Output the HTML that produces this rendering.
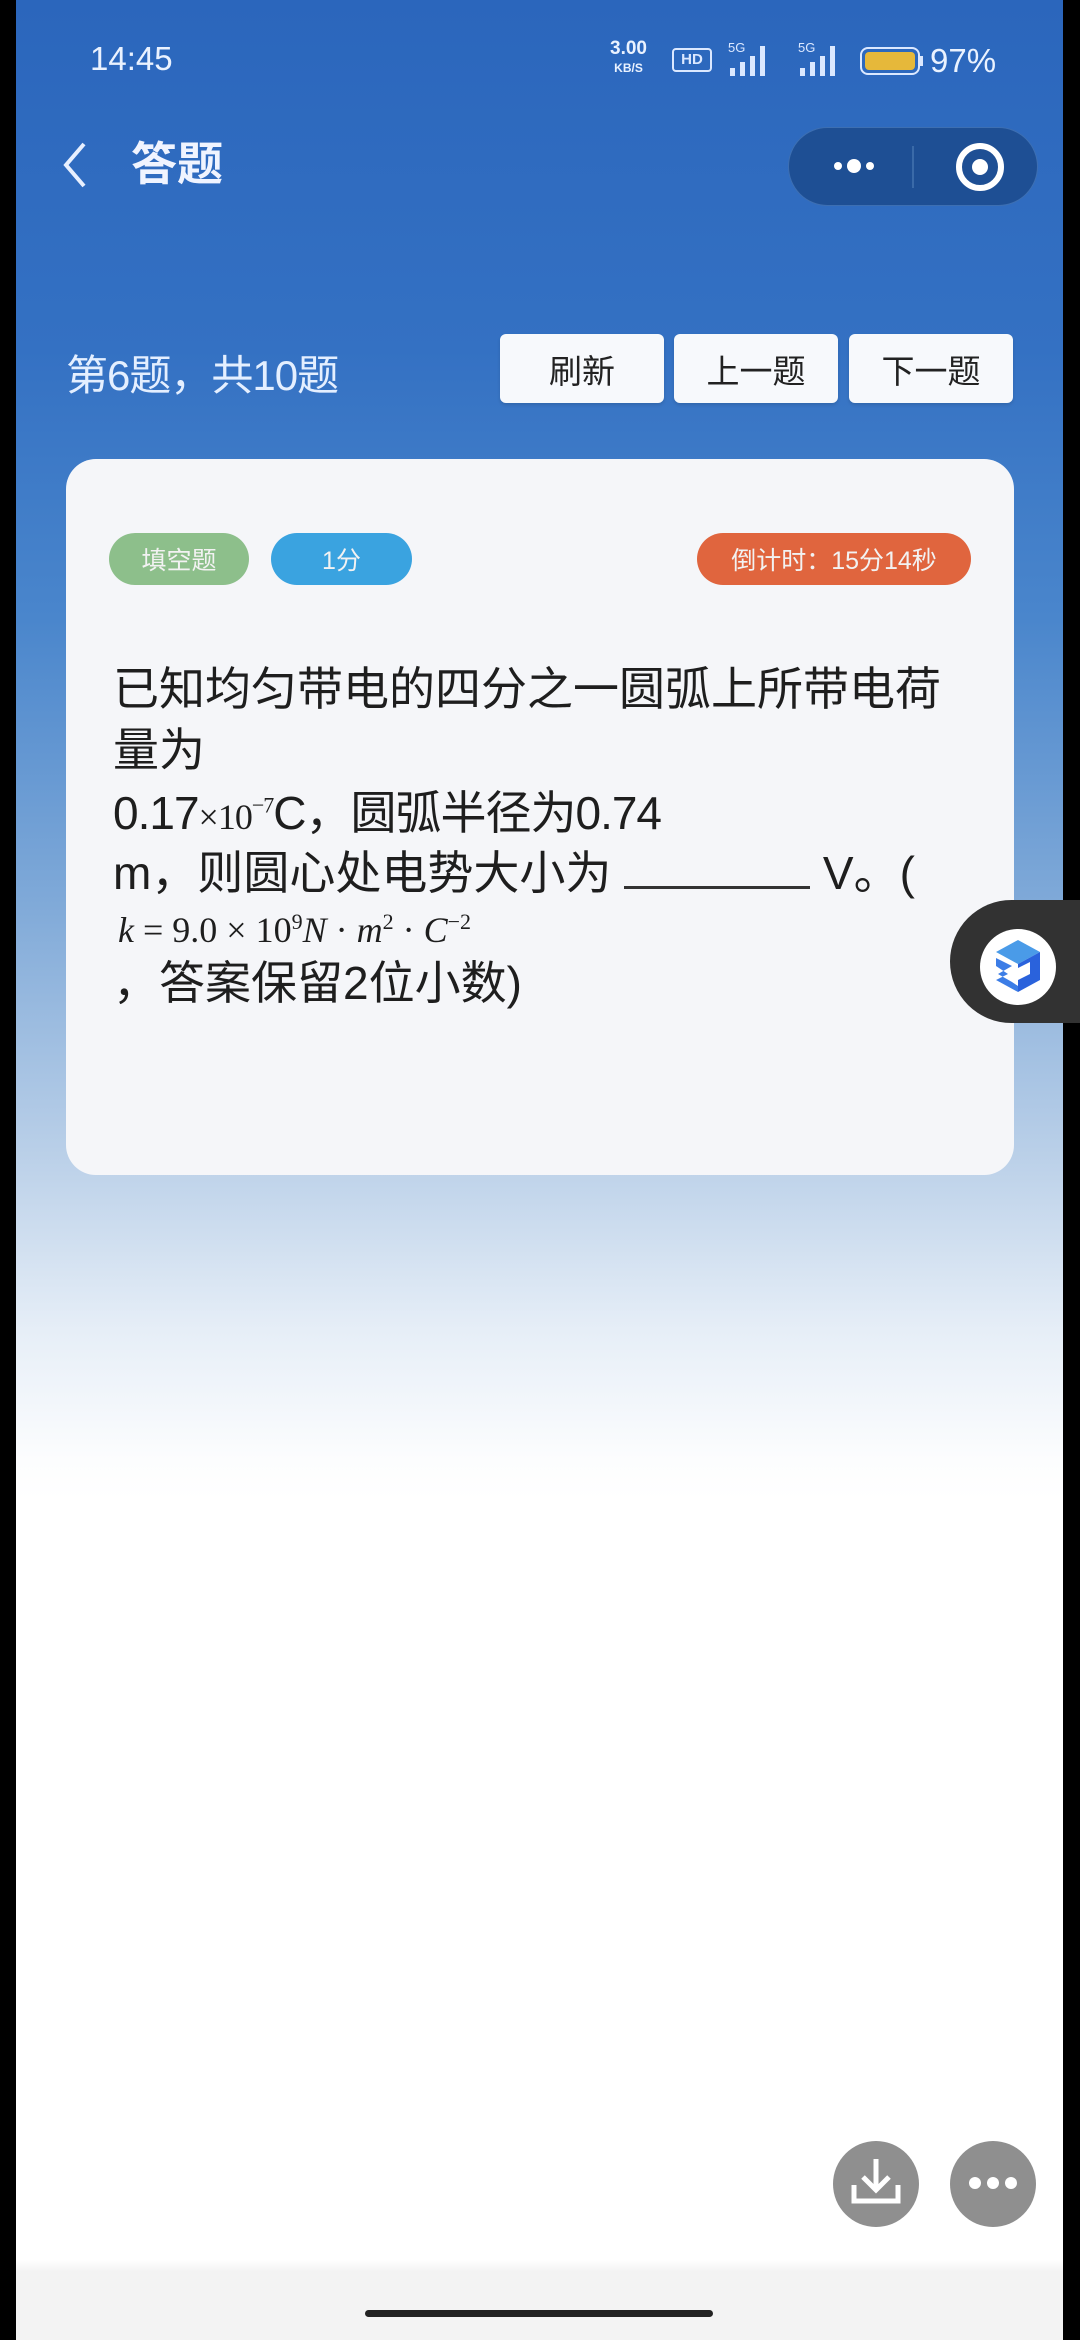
<!DOCTYPE html>
<html><head><meta charset="utf-8">
<style>
*{margin:0;padding:0;box-sizing:border-box}
body{width:1080px;height:2340px;position:relative;overflow:hidden;background:#000;font-family:"Liberation Sans","Noto Sans CJK SC",sans-serif}
#scr{position:absolute;left:16px;top:0;width:1047px;height:2340px;background:linear-gradient(180deg,#2b66bc 0px,#3471c3 350px,#4a86cc 620px,#7fa9d8 900px,#b9cfe8 1150px,#e6eef7 1330px,#fcfdfe 1460px,#fff 1500px,#fff 2260px,#f3f3f3 2272px,#f3f3f3 2340px)}
.a{position:absolute}
.st{color:#eaf2ff}
.btn{position:absolute;top:334px;width:164px;height:69px;background:#f7f9fc;border-radius:6px;color:#222;font-size:33px;display:flex;align-items:center;justify-content:center;box-shadow:0 2px 3px rgba(0,0,0,.12)}
.card{position:absolute;left:50px;top:459px;width:948px;height:716px;background:#f5f6f9;border-radius:30px}
.tag{position:absolute;top:74px;height:52px;border-radius:26px;color:#f2f2f2;font-size:25px;display:flex;align-items:center;justify-content:center}
.q{position:absolute;left:47px;color:#1e1e1e;font-size:46px;line-height:46px;white-space:nowrap}
.m{font-family:"Liberation Serif","DejaVu Serif",serif;font-style:italic}
</style></head><body>
<div id="scr">
<div class="a st" style="left:74px;top:40px;font-size:33px">14:45</div>
<div class="a st" style="left:594px;top:40px;font-size:19px;font-weight:bold;line-height:18px;text-align:center">3.00<br><span style="font-size:12px">KB/S</span></div>
<div class="a" style="left:656px;top:48px;width:40px;height:24px;border:2px solid #dbe8ff;border-radius:4px;color:#dbe8ff;font-size:15px;font-weight:bold;text-align:center;line-height:20px">HD</div>
<svg class="a" style="left:712px;top:38px" width="50" height="40"><text x="0" y="14" font-size="13" fill="#dbe8ff" font-family="Liberation Sans">5G</text><rect x="2" y="30" width="5" height="8" fill="#dbe8ff"/><rect x="12" y="24" width="5" height="14" fill="#dbe8ff"/><rect x="22" y="18" width="5" height="20" fill="#dbe8ff"/><rect x="32" y="8" width="5" height="30" fill="#dbe8ff"/></svg>
<svg class="a" style="left:782px;top:38px" width="50" height="40"><text x="0" y="14" font-size="13" fill="#dbe8ff" font-family="Liberation Sans">5G</text><rect x="2" y="30" width="5" height="8" fill="#dbe8ff"/><rect x="12" y="24" width="5" height="14" fill="#dbe8ff"/><rect x="22" y="18" width="5" height="20" fill="#dbe8ff"/><rect x="32" y="8" width="5" height="30" fill="#dbe8ff"/></svg>
<div class="a" style="left:844px;top:47px;width:60px;height:28px;border:2px solid #dbe8ff;border-radius:8px;padding:3px"><div style="width:100%;height:100%;background:#e6b83a;border-radius:4px"></div></div>
<div class="a" style="left:904px;top:56px;width:3px;height:10px;background:#dbe8ff"></div>
<div class="a st" style="left:914px;top:42px;font-size:33px">97%</div>

<svg class="a" style="left:40px;top:140px" width="40" height="50"><path d="M28 4 L10 25 L28 46" stroke="#e8f0ff" stroke-width="4" fill="none"/></svg>
<div class="a" style="left:115px;top:136px;font-size:46px;font-weight:bold;color:#f0f4ff;line-height:56px">答题</div>
<div class="a" style="left:772px;top:127px;width:250px;height:79px;border-radius:40px;background:#1e4f94;border:1px solid #3d6fb2"></div>
<div class="a" style="left:896px;top:146px;width:2px;height:42px;background:#3a6aa8"></div>
<div class="a" style="left:818px;top:162px;width:8px;height:8px;border-radius:50%;background:#fff"></div>
<div class="a" style="left:831px;top:159px;width:14px;height:14px;border-radius:50%;background:#fff"></div>
<div class="a" style="left:850px;top:162px;width:8px;height:8px;border-radius:50%;background:#fff"></div>
<div class="a" style="left:940px;top:143px;width:48px;height:48px;border-radius:50%;border:6px solid #fff"></div>
<div class="a" style="left:956px;top:159px;width:16px;height:16px;border-radius:50%;background:#fff"></div>

<div class="a" style="left:50px;top:342px;font-size:42px;color:#e4efff;letter-spacing:-1px">第6题，共10题</div>
<div class="btn" style="left:484px">刷新</div>
<div class="btn" style="left:658px">上一题</div>
<div class="btn" style="left:833px">下一题</div>

<div class="card">
<div class="tag" style="left:43px;width:140px;background:#8dbf8b">填空题</div>
<div class="tag" style="left:205px;width:141px;background:#3aa3e0">1分</div>
<div class="tag" style="left:631px;width:274px;background:#e0653e">倒计时：15分14秒</div>
<div class="q" style="top:207px">已知均匀带电的四分之一圆弧上所带电荷</div>
<div class="q" style="top:268px">量为</div>
<div class="q" style="top:331px;letter-spacing:-1px">0.17<span class="m" style="font-style:normal;font-size:36px">×10</span><sup style="font-size:22px;font-family:'Liberation Serif',serif;line-height:0">−7</sup>C，圆弧半径为0.74</div>
<div class="q" style="top:391px">m，则圆心处电势大小为 <span style="display:inline-block;width:186px;border-bottom:3px solid #333;height:38px"></span> V。(</div>
<div class="q m" style="top:453px;font-size:36px;line-height:36px;left:52px">k <span style="font-style:normal">= 9.0 × 10<sup style="font-size:22px;line-height:0">9</sup></span>N <span style="font-style:normal">·</span> m<sup style="font-size:22px;font-style:normal;line-height:0">2</sup> <span style="font-style:normal">·</span> C<sup style="font-size:22px;font-style:normal;line-height:0">−2</sup></div>
<div class="q" style="top:501px">，答案保留2位小数)</div>
</div>

<div class="a" style="left:934px;top:900px;width:130px;height:123px;background:#323232;border-radius:62px 0 0 62px"></div>
<div class="a" style="left:964px;top:929px;width:76px;height:76px;border-radius:50%;background:#fff"></div>
<svg class="a" style="left:970px;top:934px" width="64" height="66" viewBox="0 0 64 66"><path d="M32 6 L54 18 L32 30 L10 18Z" fill="#4a9be8"/><path d="M54 18 L54 46 L32 58 L32 30Z" fill="#2a62dc"/><path d="M10 24 L26 32 L12 40 L26 48 L32 52 L32 58 L10 46 L22 40 L10 32Z" fill="#3c7de6"/><path d="M32 34 L44 28 L44 40 L32 46Z" fill="#fff"/></svg>

<div class="a" style="left:817px;top:2141px;width:86px;height:86px;border-radius:50%;background:#8f8f8f"></div>
<svg class="a" style="left:817px;top:2141px" width="86" height="86"><path d="M43 18 V48 M30 36 L43 49 L56 36" stroke="#fff" stroke-width="5" fill="none"/><path d="M21 44 V60 H65 V44" stroke="#fff" stroke-width="5" fill="none"/></svg>
<div class="a" style="left:934px;top:2141px;width:86px;height:86px;border-radius:50%;background:#8f8f8f"></div>
<div class="a" style="left:953px;top:2177px;width:12px;height:12px;border-radius:50%;background:#fff"></div>
<div class="a" style="left:971px;top:2177px;width:12px;height:12px;border-radius:50%;background:#fff"></div>
<div class="a" style="left:989px;top:2177px;width:12px;height:12px;border-radius:50%;background:#fff"></div>

<div class="a" style="left:349px;top:2310px;width:348px;height:7px;border-radius:4px;background:#222"></div>
</div>
</body></html>
